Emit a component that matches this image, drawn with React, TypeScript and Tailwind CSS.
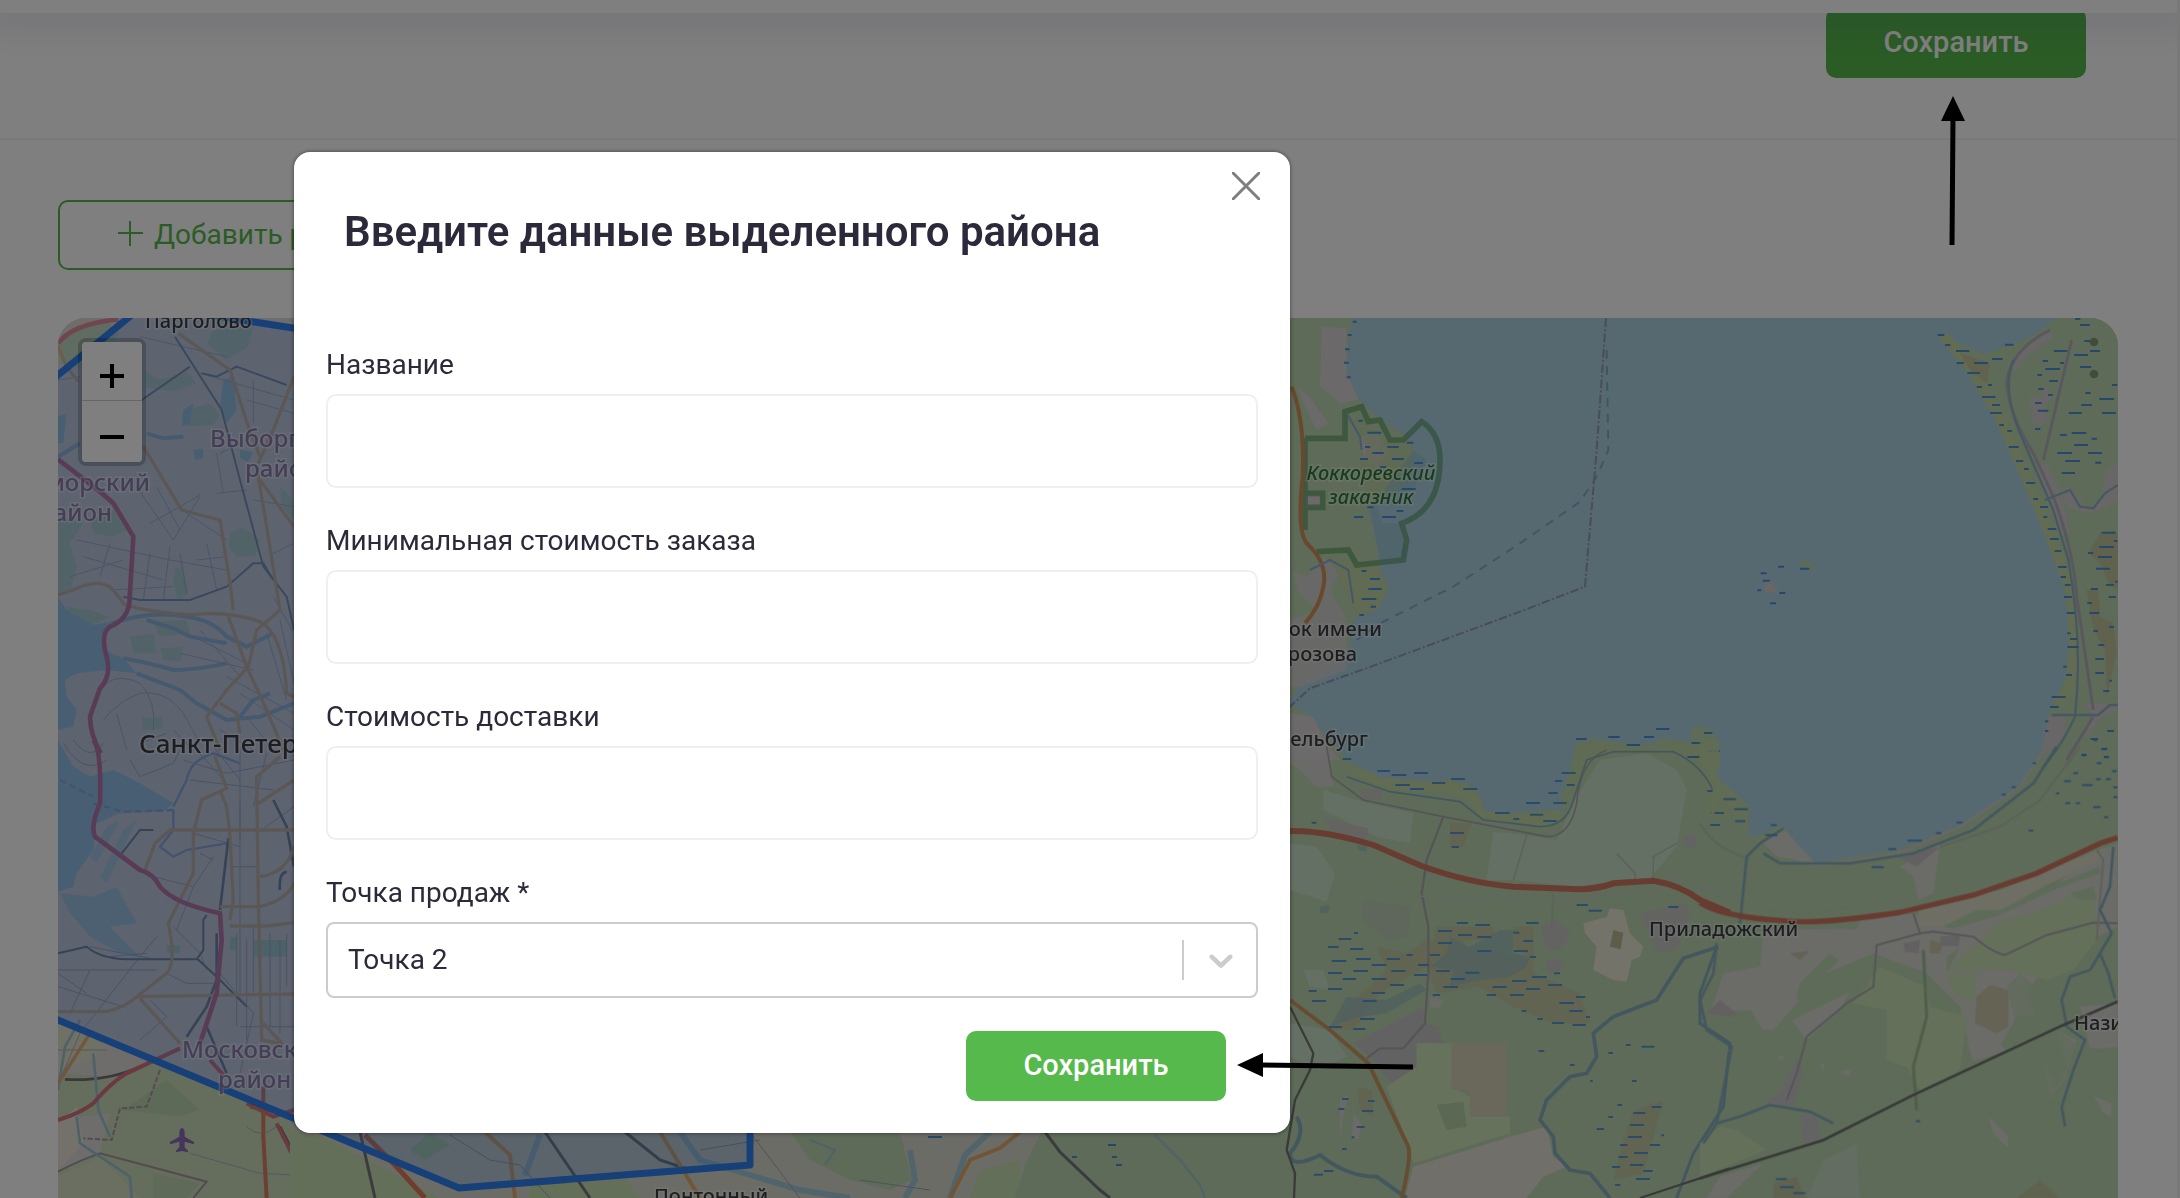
import { useId, useState } from 'react';
import type { ReactNode } from 'react';

const OUTLETS = ['Точка 1', 'Точка 2', 'Точка 3'];

const LAKE =
  'M1353 318L1349 340L1346 365L1349 378L1357 397L1370 410L1390 425L1405 435L1413 448L1413 470L1400 490L1368 508L1372 525L1377 545L1380 570L1388 585L1380 605L1360 614L1350 625L1350 650L1338 663L1310 678L1298 688L1288 704L1305 712L1320 730L1335 745L1347 760L1362 768L1378 776L1388 786L1420 785L1450 779L1475 788L1485 812L1510 815L1540 810L1562 812L1568 790L1573 765L1575 742L1590 738L1620 742L1650 745L1662 738L1690 742L1693 725L1710 728L1718 740L1720 760L1714 775L1723 795L1745 805L1750 810L1748 830L1752 838L1760 836L1785 828L1800 850L1815 863L1850 857L1895 850L1930 838L1965 823L1990 808L2015 790L2035 765L2048 745L2047 718L2055 700L2065 680L2068 650L2068 620L2065 590L2055 560L2045 525L2035 500L2020 470L2010 440L2000 420L1985 395L1970 375L1955 355L1943 335L1965 345L1985 354L2010 345L2035 335L2055 318Z';

const DISTRICT =
  'M-40 450L58 375L128 318L150 300L200 313L235 319L293 328L420 350L750 700L750 1165L459 1188L325 1132L293 1118L58 1020L-40 980Z';

// each tile is drawn in its own 3x coordinate space
function Tile({ x, y, children }: { x: number; y: number; children: ReactNode }) {
  return <g transform={`translate(${x} ${y}) scale(0.33333)`}>{children}</g>;
}

function CityNorth() {
  return (
    <Tile x={40} y={300}>
      <g fill="#b9d8c0">
        <path d="M54 130L100 90L200 60L240 100L200 160L140 210L60 190Z" />
        <path d="M520 90L640 80L625 140L560 180L500 130Z" />
        <path d="M315 210L360 240L440 215L470 250L400 275L315 262Z" />
        <path d="M455 325L510 310L540 345L520 375L440 380Z" />
        <path d="M570 700L610 680L660 720L645 770L590 770L565 740Z" />
        <path d="M54 650L130 670L90 730L110 800L90 880L54 880Z" />
        <path d="M150 660L220 630L260 690L220 710L160 700Z" />
        <path d="M720 560L762 600L762 660L725 620Z" />
        <path d="M340 965L440 960L450 1000L360 1010Z" />
        <path d="M270 1010L340 1000L350 1060L280 1060Z" />
        <path d="M360 1045L430 1040L420 1085L370 1080Z" />
        <path d="M405 805L430 800L445 880L415 900L400 850Z" />
        <path d="M305 1255L365 1250L370 1285L310 1290Z" />
        <path d="M80 920L150 930L210 950L160 975L90 950Z" />
      </g>
      <g fill="#9cc8e0">
        <path d="M54 890L80 930L160 975L215 965L190 1000L190 1050L250 1075L290 1120L200 1110L110 1120L75 1140L80 1190L110 1230L100 1280L54 1290Z" />
        <path d="M550 240L580 230L590 330L560 370L540 320Z" />
        <path d="M430 330L460 310L450 370L425 380Z" />
        <path d="M460 450L490 445L490 475L465 480Z" />
        <path d="M600 450L640 455L625 485L600 475Z" />
        <path d="M54 350L80 340L70 430L54 430Z" />
      </g>
      <g fill="none" stroke="#94b8d6" strokeWidth="12">
        <path d="M320 400L370 415L430 410" />
        <path d="M54 470L120 430" />
        <path d="M215 970Q330 930 440 950Q520 960 560 1010L620 1040L700 1000" />
        <path d="M250 1075Q330 1090 400 1110Q470 1110 560 1090" />
        <path d="M290 1120L420 1170L470 1210L560 1260L660 1250L762 1210" />
        <path d="M320 960L400 985L450 1010L560 1030" />
        <path d="M600 1250L640 1200L690 1180" />
      </g>
      <g fill="none" stroke="#a9a9bd" strokeWidth="3">
        <path d="M480 220L762 300M620 300L762 340M640 240V370M300 110L560 170" />
        <path d="M110 720L390 780L560 810M130 770L370 840M90 830L250 780M210 730L180 830M330 760L310 900M390 740L370 900" />
        <path d="M290 560L400 720M350 560L420 690M400 720L480 590M440 640L560 720" />
        <path d="M530 580L620 570M530 460L550 580M620 420L540 460M330 670L420 620L480 585" />
        <path d="M200 1150Q240 1120 300 1150Q350 1200 340 1290M190 1260Q240 1200 300 1180Q380 1170 430 1240L480 1330" />
        <path d="M700 760L762 730M680 400L762 420M640 600L762 620M700 890L762 1000M720 960L762 1150M680 1000L740 1200" />
        <path d="M440 1000L620 1090M480 990L600 1130M420 1060L640 1110M560 1130L762 1240M600 1180L762 1290" />
        <path d="M540 1290L640 1350M620 1250L700 1350M400 1290L460 1350M230 1240L260 1350M300 1330L380 1300" />
        <path d="M210 870L400 860M420 760L440 880M500 730L530 870M470 780L560 770M54 240L120 230" />
      </g>
      <g fill="none" stroke="#74839c" strokeWidth="6">
        <path d="M405 110L545 330L600 540L670 800L740 890L762 990" />
        <path d="M305 300L450 200M485 220L530 230L590 200L740 255" />
        <path d="M250 890L300 900L450 900L560 860L640 790L670 790L700 840" />
      </g>
      <g fill="none" stroke="#d9b285" strokeWidth="10">
        <path d="M54 140L80 200L115 245M310 440L425 630L540 660L570 850L580 930" />
        <path d="M415 100L570 210L625 380L660 470M762 230L700 390L655 490" />
        <path d="M650 500L680 680L720 930M660 540L762 680" />
        <path d="M54 885L100 870Q180 830 220 870L250 910Q280 930 450 945Q560 930 660 965Q730 1000 740 1180L762 1190" />
        <path d="M565 950L620 1100L680 1230L730 1350M720 930L650 990L625 1100L560 1170L500 1250L540 1350M540 1210L590 1240L600 1300" />
      </g>
      <g fill="none" strokeWidth="14">
        <path stroke="#e0788c" d="M54 130Q100 70 235 58" />
        <path stroke="#d05a88" d="M54 478L180 575L220 610L280 710L268 910Q260 960 210 980Q180 1000 200 1070Q215 1130 180 1165L150 1250Q150 1300 182 1360" />
      </g>
    </Tile>
  );
}

function CitySouth() {
  return (
    <Tile x={40} y={740}>
      <g fill="#c6deb0">
        <path d="M54 850L140 880L200 930L54 1000Z" fill="#e3e6c8" />
        <path d="M54 1000L200 1010L340 960L620 1080L762 1150L810 1180V1374H54V1290L180 1240L210 1120L54 1140Z" />
        <path d="M54 1150L110 1100L130 1210L54 1290Z" fill="#e9e6d4" />
        <path d="M250 1110L380 1020L480 1110L420 1130Z" fill="#b5d3a6" />
        <path d="M54 1310L180 1250L300 1374H54Z" fill="#d5dfc0" />
        <path d="M340 1300L480 1330L440 1374H340Z" fill="#b8d3a8" />
      </g>
      <g fill="#9cc8e0">
        <path d="M54 0L100 80L150 110L220 90L300 130L400 190L370 215L240 220L170 250L160 330L110 400L100 440L54 455Z" />
        <path d="M60 460L160 470L230 440L290 550L210 560L300 650L240 640L150 590L90 520Z" opacity=".75" />
        <path d="M200 260L240 240L170 370L150 350ZM250 270L290 240L200 430L180 410Z" opacity=".6" />
      </g>
      <g fill="#a5d5c5">
        <path d="M570 590H590V630H570ZM640 600H740V650H640ZM380 615H420V640H380Z" />
      </g>
      <g fill="none" stroke="#8aa6d2" strokeWidth="7">
        <path d="M400 200L440 120Q450 60 520 40L600 70M400 210L400 270L360 320L400 350L440 330L500 320L560 310" />
        <path d="M160 190L250 215L400 210" strokeDasharray="20 12" />
        <path d="M60 120L160 170" strokeDasharray="20 12" />
      </g>
      <g fill="none" stroke="#a2a3b6" strokeWidth="3">
        <path d="M70 10Q130 110 200 60M100 0Q150 70 190 10M270 60L300 110L400 70L420 30M430 60L560 100L762 60M450 120L700 150M470 30L560 130M520 20L600 120M600 20V300M680 40L640 200" />
        <path d="M460 280L600 320M600 200V760M570 380H650M650 280L762 200M480 340L520 360M340 410L460 440L520 350M410 570L460 440" />
        <path d="M54 690L150 690L350 690M54 740L250 800M150 690L90 820M350 590L300 650L120 880L60 1020M400 560L480 640L500 690M380 700L440 730L520 730" />
        <path d="M590 580V860M620 600V900M640 560V760M690 580V860M720 600V880M740 580V740M600 860H762M540 700L640 820L600 1000" />
        <path d="M54 930L200 930M54 700L140 760M330 780L380 830L300 900M150 620L250 640L360 660M210 650L320 640" />
        <path d="M450 1240L660 1300L762 1305M620 1160Q660 1200 710 1160" />
      </g>
      <g fill="none" stroke="#63748a" strokeWidth="6">
        <path d="M54 640L140 620Q180 655 260 658L470 658L490 630V540L500 525M245 340L300 270H340M470 655L530 710L620 800" />
        <path d="M565 295L540 510M700 180L740 260L762 380M740 395Q715 400 720 450M530 580L530 720L500 800L440 890M500 860L560 1000" strokeWidth="8" />
        <path d="M75 1018Q200 1025 300 980L410 930M720 1160L810 1330" stroke="#5d5a58" strokeWidth="8" />
      </g>
      <g fill="none" stroke="#9b8796" strokeWidth="6">
        <path d="M54 1295Q120 1260 180 1240L500 1325L460 1374" />
        <path d="M360 990L320 1100L240 1105L215 1200L130 1195" strokeDasharray="16 6" />
      </g>
      <g fill="none" stroke="#8fbdd0" strokeWidth="8">
        <path d="M120 840L75 920L54 1050M110 1130L120 1210L180 1250L270 1310L275 1374M160 940L175 1110L210 1190" />
      </g>
      <g fill="none" stroke="#d9b285" strokeWidth="10">
        <path d="M54 815H200Q260 800 290 770L380 700Q410 670 385 550L460 400L460 280L485 180L560 145L525 50" />
        <path d="M315 390L345 310L390 270H650L762 270M540 150L560 200L570 290L580 480L570 540" />
        <path d="M720 50L650 110L655 480L665 900L720 910M655 190L762 120M660 410Q740 400 762 320" />
        <path d="M540 500H660Q740 480 762 430M570 558H680L762 548M290 770L762 762M300 775L420 910M670 850L730 915" />
      </g>
      <g fill="none" strokeWidth="14">
        <path stroke="#e2a25e" strokeWidth="10" d="M150 880L54 1030" />
        <path stroke="#d05a88" d="M160 0Q185 30 180 190Q150 260 165 290L300 390Q340 400 360 440Q400 490 540 520L545 600L530 760L480 910" />
        <path stroke="#d75a6c" strokeWidth="12" d="M54 1140Q120 1120 160 1090Q210 1030 260 1000L420 925M510 960L550 1005M620 1090L700 1130L762 1110M710 1150L760 1250L800 1374" />
        <path stroke="#d8694a" strokeWidth="12" d="M670 1040V1190L680 1374M630 1100L740 1120" />
      </g>
      <path
        fill="#7a4fae"
        d="M426 1164Q434 1166 434 1180V1190L462 1206V1213L434 1205V1222L444 1232V1237L426 1233L408 1237V1232L418 1222V1205L390 1213V1206L418 1190V1180Q418 1166 426 1164Z"
      />
    </Tile>
  );
}

// strip of the map that stays visible under the dialog
function RiverStrip() {
  return (
    <g fill="none">
      <path fill="#d8d9ce" d="M290 1125H1290V1198H290Z" />
      <path fill="#c6deb0" d="M290 1130L330 1140L440 1198H290ZM530 1180L620 1172L640 1198H530ZM980 1170L1020 1160V1198H970Z" />
      <path fill="#bad6b0" d="M790 1132H900L912 1180L890 1190L850 1180L810 1160ZM1045 1125L1290 1110V1198H1015L1025 1165ZM430 1132L450 1145L425 1160L410 1150Z" />
      <path stroke="#a5c9d6" strokeWidth="6" d="M680 1132L700 1160L760 1178L800 1190L850 1198M990 1132L965 1155L950 1198M540 1135L525 1175M910 1150L915 1180L905 1198" />
      <path stroke="#9cc4d2" strokeWidth="2" d="M1155 1135L1180 1160L1200 1185L1205 1198M810 1140L835 1150L825 1165" />
      <path stroke="#77777a" strokeWidth="3" d="M360 1132L375 1198M545 1132L590 1198M625 1132L660 1160L690 1170M1045 1132L1060 1152L1100 1190L1110 1198" />
      <path stroke="#e0ac6e" strokeWidth="4" d="M485 1132L510 1155L515 1198M660 1132L680 1165L700 1198M1020 1132L1000 1148L970 1160L950 1198" />
      <path stroke="#e0785c" strokeWidth="5" d="M365 1135L395 1165L425 1198" />
      <path stroke="#4a90d0" strokeWidth="2" d="M928 1137h14M1108 1145h8M1072 1157h5M1112 1157h5M1116 1165h6" />
      <path stroke="#a2a3b6" d="M450 1135L490 1160L520 1165L550 1198M700 1150L760 1140M750 1132L800 1198M860 1180L930 1190" />
    </g>
  );
}

function LakeWest() {
  return (
    <Tile x={1280} y={310}>
      <g fill="#d6d2d4">
        <path d="M125 50L200 55L200 190L235 270L180 280L120 230Z" />
        <path d="M50 230L90 260L145 340L110 360L75 290Z" />
        <path d="M240 380L290 370L325 430L290 470L250 440Z" />
        <path d="M78 555H120V590H78Z" />
        <path d="M35 780L80 800L130 740L180 790L150 840L200 930V1080L60 1130H30V930L110 900L60 850Z" opacity=".8" />
        <path d="M30 1210L100 1220L140 1300L180 1350H30Z" />
      </g>
      <path fill="#c2d4a6" d="M200 310L250 330L310 380L400 410L395 480L330 540L270 570L240 500L260 410Z" opacity=".6" />
      <path fill="#c2d4a6" d="M150 740L290 770L325 840L290 900L230 920L200 850Z" />
      <path fill="#93bdd0" opacity=".5" d="M400 420L440 450L400 540L280 570L310 640L360 640L380 740L300 750L270 600Z" />
      <g fill="none">
        <path stroke="#4a9153" strokeWidth="17" opacity=".55" d="M75 385H195V305L245 290L265 335L300 330L330 390H370L425 335Q480 370 480 450Q480 600 365 640L380 690L370 750L230 765L205 720L110 725M75 550H128V592H75M75 385V660" />
        <path stroke="#d0935a" strokeWidth="12" d="M35 230Q75 330 68 500Q50 660 80 700Q145 760 130 830Q120 890 75 940" />
        <path stroke="#8a84a4" strokeWidth="6" strokeDasharray="26 7 6 7" opacity=".75" d="M978 25L950 420L915 830L720 905L300 1060L90 1135L30 1190" />
        <path stroke="#7c9cc8" strokeWidth="6" strokeDasharray="26 22" opacity=".8" d="M980 120L985 420L950 500L900 575L720 700L520 830L300 940L230 990" />
        <path stroke="#8aaed4" strokeWidth="6" d="M90 780L150 750L205 780L220 880M200 310L240 380L245 420" />
        <path stroke="#4a90d8" strokeWidth="6" d="M218 35h12M203 75h12M195 118h14M192 158h14M200 202h12M262 368h20M282 368h22M235 332h14M255 411h16M322 411h34M380 398h20M277 429h34M240 447h24M336 447h36M403 459h26M300 471h18M365 537h42M262 592h18M350 603h20M222 621h28M306 621h42M245 783h14M270 807h30M265 837h40M245 867h44M272 890h16M238 915h14M888 1287h32M985 1281h34M1040 1305h38M1092 1281h30M1128 1257h40M1275 1269h22M1235 1299h36M1280 1323h40M1225 1341h36" />
      </g>
    </Tile>
  );
}

function LakeEast() {
  return (
    <Tile x={1700} y={310}>
      <g fill="#d2cdcf">
        <path d="M940 140L1050 60L1060 80L980 140L945 190Z" />
        <path d="M990 250L1015 270L1040 225L1055 260L1030 290L1045 330L1020 352L995 330Z" />
        <path d="M1010 470L1040 460L1085 550L1110 670L1085 670Z" />
        <path d="M1085 540L1110 530L1165 600L1205 570L1215 490L1253 460V570L1200 600L1165 612L1100 590Z" />
        <path d="M1045 1220H1100L1085 1290L1020 1350Z" />
        <path d="M1150 1180H1253V1200L1205 1220L1165 1280L1150 1260L1180 1215Z" />
        <path d="M190 830L210 808L240 850L195 845Z" />
      </g>
      <g fill="#c9b68c" opacity=".5">
        <path d="M1165 730L1200 670H1253V840L1225 820L1200 760Z" />
        <path d="M1160 840H1195L1200 920L1240 940L1250 1030L1220 1160L1215 1020L1180 960Z" />
        <path d="M780 130L870 160L860 220L810 180Z" />
      </g>
      <path fill="#c0d6a6" d="M300 745L350 770L340 780L310 770ZM850 140L940 110L930 125L860 150Z" />
      <path fill="none" stroke="#b3b0bc" strokeWidth="9" d="M1050 60Q930 120 920 220Q930 320 1000 430L1060 560Q1120 720 1130 860L1180 1200M1115 90L1030 450M1180 1220L1100 1350" />
      <path fill="none" stroke="#8cb2c2" strokeWidth="7" d="M940 150Q905 240 960 370L1060 600L1105 750Q1150 1000 1125 1220Q1090 1300 1030 1370M1035 570L1110 540L1140 590L1180 595L1215 550L1253 525M1055 1215H1195L1230 1185H1253" />
      <path
        fill="none"
        stroke="#4a90d8"
        strokeWidth="6"
        d="M1125 27h16M1140 45h30M713 75h20M735 105h16M915 104h26M1153 93h30M768 123h40M1062 123h40M1170 123h30M1122 135h42M876 147h32M1028 153h16M770 159h22M822 159h42M1080 159h12M1140 171h34M1036 177h44M802 189h38M1012 195h14M1048 213h26M1236 225h16M830 231h16M864 225h12M1015 237h16M1156 249h16M1044 255h14M846 261h40M1198 267h44M1005 279h20M876 285h24M1144 285h32M1013 302h32M870 309h36M1106 309h40M1206 309h42M898 345h14M1005 357h16M922 363h14M1115 369h44M1080 375h20M1175 386h16M1122 405h42M926 411h30M1072 429h44M1164 429h42M948 453h22M1096 453h44M1186 458h18M972 477h14M1085 489h40M978 519h28M1000 567h14M1020 591h24M1030 621h12M1043 657h26M1205 668h42M1050 687h26M1242 693h10M1198 711h44M1064 723h20M1164 729h16M1194 741h42M1074 771h26M1188 776h42M300 776h28M234 770h18M182 790h18M1082 801h16M188 812h22M1246 815h7M1094 825h18M1218 825h24M1172 837h22M172 841h12M238 849h18M1092 861h24M1226 861h22M210 880h18M1162 879h14M1100 909h24M1168 909h30M1228 951h14M1180 963h14M1102 970h10M1110 987h22M1102 1011h34M1195 1005h18M1186 1047h26M1090 1070h10M1186 1089h26M1098 1095h18M1228 1112h8M1210 1143h18M1055 1161h42M1050 1191h26M1035 1234h10M1222 1263h20M1035 1263h10M12 1269h24M1172 1287h22M1205 1317h16M1145 1335h14M1212 1341h14"
      />
      <circle cx="1182" cy="96" r="13" fill="#7f9b74" />
      <circle cx="1182" cy="192" r="13" fill="#7f9b74" />
    </Tile>
  );
}

function SouthWest() {
  return (
    <Tile x={1280} y={740}>
      <g fill="#cde3ce">
        <path d="M890 170L960 60L1100 40L1190 90L1220 150L1190 320L1110 415L1000 420L900 440L700 420H620L640 275L740 285L830 300Z" />
        <path d="M130 150L250 185L400 220L390 310L290 290L130 210Z" />
        <path d="M30 310L110 320L165 400L140 485L30 450ZM70 690L130 690L150 750L90 740ZM30 850L150 870L200 950L120 990L30 950Z" />
      </g>
      <g fill="#d8d4d6">
        <path d="M30 20L140 10L160 140L110 140L60 90L30 70Z" />
        <path d="M240 150L310 145L300 180L250 175ZM135 235L265 265L255 310L150 270Z" fill="#cac6c8" />
        <path d="M220 910L430 800L435 850L475 860L490 910L405 915L410 980L340 1040L280 960Z" fill="#c8c3c8" />
        <path d="M250 480L390 500L385 590L320 600L250 540Z" fill="#c0cdba" />
        <path d="M780 560L830 540L875 580L840 630H800ZM1210 290L1250 280V325L1215 320ZM800 660L850 655V690L800 700Z" fill="#c9c8c8" />
        <path d="M1080 520L1220 490L1230 520L1190 630L1130 635Z" fill="#c8c5c8" />
        <path d="M180 1080L205 1060L190 1130L180 1200ZM220 1120L245 1150L235 1200L215 1190ZM450 770L490 780L480 805L450 800Z" />
      </g>
      <path fill="#eee8da" d="M910 550L980 530L990 505L1030 510L1050 580L1090 620L1080 650L1055 660L1040 725L1000 720L940 690L950 620L915 580Z" />
      <path fill="#bcb78f" d="M1000 570L1030 578L1022 628L990 620Z" />
      <path fill="#d0e6ba" d="M410 980V910H515V1040L570 1070V1130L690 1130V1180L400 1270L390 1230L320 1040Z" />
      <path fill="#d6d0b8" d="M515 910H680V1130H570V1050H515Z" />
      <path fill="#b4d0a8" d="M470 1095L550 1085L560 1160L500 1170Z" />
      <path fill="#e6e0d6" d="M375 1374L400 1280L690 1190L800 1160L820 1250L860 1280L790 1310L740 1374Z" />
      <g fill="#cdb98a" opacity=".45">
        <path d="M470 560H640V600H560L500 640L450 650ZM700 560H760V700L900 760L930 850H820L700 800L600 740L470 760L440 680L300 760L220 870L150 870L200 800L320 690L290 620L380 640L440 600L760 660L700 620Z" />
        <path d="M510 250H575L550 320H510ZM230 1040L275 1050L280 1130L240 1110ZM1060 1110L1150 1080L1090 1300L1000 1320L1030 1200Z" />
      </g>
      <g fill="#8cb6cf" opacity=".5">
        <path d="M510 590L570 620L660 570L700 570V640L750 650L740 680L690 710L600 720L510 740L520 690L450 680L500 640Z" />
        <path d="M200 770L320 780L420 730L440 750L320 820L240 830L150 860ZM120 500L150 495L145 520L120 520ZM230 315H260V335L235 330Z" />
      </g>
      <path fill="#c4d8a6" d="M180 70L230 85L290 110L400 120L480 125L560 130L600 170L610 215L700 220L840 210L850 250L790 260L600 230L560 170L450 150L330 150L250 120Z" />
      <path fill="#bfd6a6" d="M885 30L930 10L1080 20L1180 10L1280 10L1320 30L1310 120L1350 230L1290 230L1270 110L1190 40L960 40L890 130L850 220L840 180Z" />
      <g fill="none" stroke="#a9a5ae" strokeWidth="5">
        <path d="M140 20L155 110L250 180L490 230L800 290Q870 290 890 190Q900 60 980 30" />
        <path d="M490 230L440 360L425 460L445 560V700L435 850L370 925L300 925L260 955" strokeWidth="7" />
        <path d="M740 285L700 420M1010 340L1065 400V420M1120 420V350L1190 310M820 460L815 560" stroke="#bcc2b8" />
        <path d="M100 300L340 465L800 485L1000 460L1160 450M1150 410L1230 420L1350 475" stroke="#c8ccc4" />
        <path d="M1280 230Q1270 290 1350 330M890 1200L1340 970" stroke="#c3d2ba" />
      </g>
      <g fill="none" stroke="#82aac0" strokeWidth="9">
        <path d="M200 110L330 155L540 185L610 240L780 260Q860 260 880 180L920 60L1000 35L1180 35Q1280 80 1310 180" strokeWidth="5" />
        <path d="M1315 620L1210 655L1130 780L1000 830L940 880L950 950L920 1000L870 1010L800 1080L780 1140L820 1190L825 1240L870 1290L930 1300L990 1374" strokeWidth="11" />
        <path d="M1310 620L1260 760V850L1350 910L1330 1100L1240 1240L1190 1374" />
        <path d="M50 1130Q80 1180 30 1240Q30 1290 120 1245Q200 1310 290 1310L380 1374" strokeWidth="12" />
      </g>
      <g fill="none" stroke="#6c6c6c" strokeWidth="7">
        <path d="M30 800L100 940L90 990L45 1080L20 1230L45 1300L42 1374M1080 1374L1350 1285" />
      </g>
      <path fill="none" stroke="#d0935a" strokeWidth="12" d="M30 780L150 870L265 970L385 1220Q395 1250 365 1374" />
      <path fill="none" stroke="#d66e5c" strokeWidth="18" d="M30 273Q130 270 280 315L425 378Q570 430 700 440L900 448Q960 445 1000 430L1120 422Q1200 435 1260 480L1350 518" />
      <path
        fill="none"
        stroke="#4a90d8"
        strokeWidth="6"
        d="M188 57h26M292 93h38M402 99h42M335 105h44M513 117h42M456 129h40M346 135h44M390 147h42M550 147h42M845 99h42M825 123h22M860 135h24M805 159h28M738 189h42M820 189h40M645 219h44M750 224h40M700 237h18M790 243h40M1040 15h40M1235 9h38M1280 33h40M1222 51h36M1268 63h40M1288 93h20M1282 153h44M1332 177h18M1292 219h40M1290 255h30M95 248h14M510 279h42M515 321h22M890 495h34M926 512h40M1165 501h30M530 549h34M586 555h44M738 549h38M474 573h42M700 578h18M534 585h42M222 579h12M176 597h38M592 591h42M474 609h42M730 603h28M144 621h32M210 627h40M592 633h42M702 633h42M380 645h18M450 645h30M228 657h44M320 657h40M750 651h18M155 663h44M275 675h44M414 675h32M220 693h44M334 693h42M468 693h42M556 698h42M144 699h42M822 700h18M402 705h40M188 717h40M275 717h44M512 717h42M756 711h44M696 723h44M330 735h42M804 735h42M490 741h44M638 741h42M144 747h42M738 747h42M86 753h24M275 759h40M458 765h22M620 765h28M690 765h42M888 771h28M96 783h42M248 783h42M838 789h44M725 813h14M868 813h40M240 837h44M772 837h16M918 831h12M816 849h36M146 861h40M220 867h36M878 855h40M1038 915h14M1085 920h38M775 933h18M985 939h14M870 975h14M930 1023h8M1056 1023h14M186 1077h20M264 1083h20M1012 1095h14M175 1107h18M246 1113h34M1115 1101h30M1060 1119h36M985 1131h14M230 1161h24M950 1167h22M1050 1155h42M215 1192h8M1044 1191h42M1144 1186h8M1020 1215h22M1110 1215h30M186 1227h14M1062 1239h42M1015 1251h28M1050 1275h40M996 1281h24M132 1293h28M1090 1293h28M102 1304h26M1068 1317h42M1005 1335h16"
      />
    </Tile>
  );
}

function SouthEast() {
  return (
    <Tile x={1700} y={740}>
      <g fill="#dbd7d5">
        <path d="M190 570L470 565L480 540L640 520L740 560L900 500L1050 450L1190 330L1253 310V560L1180 600L1050 660L980 760L1010 830L950 830L900 920L820 960L780 800L680 700L520 640L380 700L300 780L220 870L190 870L150 810L30 820L70 700L180 680Z" />
        <path d="M190 310L255 270L345 370L230 350ZM600 380L720 310L700 460L655 480L640 410Z" />
        <path d="M275 840L450 755L420 810L320 900ZM800 900L860 880L920 930L820 965Z" />
        <path d="M1070 870L1130 900L1100 1010L1050 1080L1030 960L1070 1040L1100 980ZM1140 800L1253 790V920L1170 930ZM1180 1065L1235 1090V1130L1210 1120ZM865 1130L925 1190V1225L880 1180Z" />
        <path d="M250 1040L290 950L310 1000L280 1100L200 1090ZM300 1120L350 1130L365 1210L310 1220Z" fill="#cbc6c9" />
        <path d="M20 1374L60 1310L190 1270L80 1374ZM230 945L255 950L245 965ZM360 965L378 980L365 990ZM420 995L460 985L445 1010Z" />
      </g>
      <path fill="#e0decb" d="M660 500L900 450L1190 330L1220 350L1050 430L900 510L730 560L650 560Z" />
      <g fill="#cbe2b4">
        <path d="M540 680L680 740L690 800L800 830L780 990L660 1050L620 980L560 960V810L460 790Z" />
        <path d="M820 620L900 540L1000 520L1180 440L1190 600L1120 690L1040 720L930 690L740 690Z" />
        <path d="M0 1210L60 1160L110 1170L200 1230L0 1310Z" />
        <path d="M740 700L830 700L820 790L760 760Z" />
      </g>
      <g fill="#bad6b0">
        <path d="M730 560L830 510L900 510L1050 440L1200 380V400L1060 450L900 525L760 565ZM1110 460L1180 440L1190 480L1140 480Z" />
        <path d="M300 730L390 640L415 660L370 710L460 730L500 700L510 740L300 800L290 770ZM390 550L470 545V570L400 560ZM740 650L780 620L740 700Z" />
        <path d="M600 690L650 690V735Z" />
        <path d="M920 740L960 700L1080 800L1070 870L1140 920L1253 930V1060L1000 1100L900 940L960 900Z" opacity=".6" />
      </g>
      <path fill="#c3b88c" opacity=".6" d="M830 770L870 735L925 750V860L890 880L825 850ZM690 600L730 610L720 640L690 640ZM270 640L330 632L300 660ZM220 1330L290 1310L315 1374H220ZM950 1374L1020 1320L1080 1374Z" />
      <path fill="#c8dcc8" d="M320 1374L370 1260L470 1210L480 1374Z" />
      <path fill="#c6bec5" d="M610 610L660 600L655 640L615 635ZM720 590L780 585L775 620L725 615ZM20 820L60 780L110 820L90 830ZM590 350L720 320L650 380Z" />
      <path fill="#c2d8a6" d="M0 0H55L60 70L50 110L140 190L145 270L60 170L30 260L40 120L0 70ZM155 300L240 255L250 265L180 310Z" />
      <g fill="none" stroke="#a9a5ae" strokeWidth="6">
        <path d="M1253 550L1180 548L1040 585L915 645Q880 640 820 590L700 575L660 580L640 520M660 580L530 615L520 740L440 790L320 890L290 1000L260 1080" />
        <path d="M0 250Q40 320 130 350M720 320L900 260L1020 180L1140 20M1190 330L1210 360L1190 600" stroke="#b8c0b4" />
        <path d="M330 380L540 350L620 330L780 260L960 140L1050 0" stroke="#cfd0cc" strokeWidth="10" />
        <path d="M0 440Q200 540 400 510L640 465M20 860L160 845M0 970L200 880M370 1200L380 1250" stroke="#c3d2ba" strokeWidth="4" />
      </g>
      <path fill="none" stroke="#9bb894" strokeWidth="9" d="M670 630L680 830L640 980L650 1110" />
      <g fill="none" stroke="#82aac0" strokeWidth="8">
        <path d="M250 265L180 310L140 350L120 550M190 340L240 370L450 370L640 340L820 270L1000 130L1070 20" />
        <path d="M50 610L40 700L0 780L20 870L95 920L60 1100L50 1150L10 1210M50 1150L120 1130L210 1095L330 1115L400 1150" />
        <path d="M1240 320L1230 440L1200 510L1235 580L1200 640L1170 690L1110 710L1085 780L1100 860L1155 900L1120 990L1085 1100L1095 1160" />
        <path d="M1200 640L1225 700L1245 775" />
      </g>
      <path fill="none" stroke="#676767" strokeWidth="8" d="M0 1315L370 1200L640 1065L1090 855L1253 785" />
      <path fill="none" stroke="#d66e5c" strokeWidth="16" d="M0 487Q60 530 250 542Q350 555 600 517L820 465L1010 400L1200 310L1253 293" />
      <path
        fill="none"
        stroke="#4a90d8"
        strokeWidth="6"
        d="M1180 0h12M1205 27h16M1145 45h14M1190 69h14M1212 51h14M1120 99h14M1236 93h14M1092 123h20M1188 117h14M1218 117h14M1146 135h32M1240 142h12M1068 160h10M1096 189h14M1128 189h12M1240 171h12M1180 201h22M1212 231h12M986 272h14M770 248h18M708 279h16M622 302h44M515 381h36M935 141h12M905 164h12M998 69h10M70 177h38M102 207h42M106 243h30M212 255h18M196 285h36M565 327h24M648 1143h12M228 1317h32M240 1341h42M280 1359h36"
      />
    </Tile>
  );
}

function RegionMap() {
  return (
    <svg
      className="absolute inset-0 h-full w-full"
      viewBox="58 318 2060 880"
      preserveAspectRatio="xMinYMin slice"
      role="img"
      aria-label="Карта районов доставки"
    >
      <rect x="58" y="318" width="560" height="880" fill="#dcdad9" />
      <rect x="618" y="318" width="1500" height="880" fill="#bad6b0" />
      <g opacity=".8">
        <CityNorth />
        <CitySouth />
      </g>
      <RiverStrip />
      <path d={LAKE} fill="#acd3e0" />
      <path
        d="M1943 335L1970 368L2000 418L2023 470L2048 530L2072 595L2074 650L2070 685L2058 705"
        fill="none"
        stroke="#c2d8a6"
        strokeWidth="10"
      />
      <LakeWest />
      <LakeEast />
      <g opacity=".9">
        <SouthWest />
        <SouthEast />
      </g>

      <path d={DISTRICT} fill="#3388ff" fillOpacity=".2" stroke="#2f80f0" strokeWidth="7" strokeLinejoin="round" />

      <g className="font-['Noto_Sans',sans-serif] font-medium" fill="#3d3d44" stroke="#ffffff" strokeOpacity=".35" strokeWidth="3" paintOrder="stroke" fontSize="20">
        <text x="145" y="328">Парголово</text>
        <text x="139" y="753" fontSize="26">Санкт-Петербург</text>
        <text x="654" y="1203">Понтонный</text>
        <text x="1382" y="636" textAnchor="end">посёлок имени</text>
        <text x="1357" y="661" textAnchor="end">Морозова</text>
        <text x="1368" y="746" textAnchor="end">Шлиссельбург</text>
        <text x="1649" y="936">Приладожский</text>
        <text x="2074" y="1030">Назия</text>
        <g fill="#8a79b0" fontSize="24">
          <text x="210" y="447">Выборгский</text>
          <text x="245" y="477">район</text>
          <text x="150" y="491" textAnchor="end">Приморский</text>
          <text x="112" y="521" textAnchor="end">район</text>
          <text x="182" y="1058">Московский</text>
          <text x="218" y="1088">район</text>
        </g>
        <g fill="#2c7a35" fontSize="20" fontStyle="italic" textAnchor="middle">
          <text x="1371" y="480">Коккоревский</text>
          <text x="1371" y="504">заказник</text>
        </g>
      </g>
    </svg>
  );
}

function Field({ label }: { label: string }) {
  const id = useId();
  return (
    <div className="flex flex-col gap-[13px]">
      <label htmlFor={id} className="text-[28px] leading-8">
        {label}
      </label>
      <input id={id} type="text" className="h-[94px] w-full rounded-[10px] border-2 border-[#efefef] px-5 text-[28px] outline-none" />
    </div>
  );
}

function AreaDialog() {
  const [outlet, setOutlet] = useState('Точка 2');

  return (
    <div
      role="dialog"
      aria-modal="true"
      aria-labelledby="area-title"
      className="w-full max-w-[996px] rounded-2xl bg-white pb-8 text-[#2c2a3a] shadow-[0_0_4px_rgba(0,0,0,0.5)]"
    >
      <div className="flex items-start justify-between pt-5 pr-[30px] pl-[50px]">
        <h2 id="area-title" className="pt-9 text-[42px] leading-[48px] font-semibold">
          Введите данные выделенного района
        </h2>
        <button type="button" aria-label="Закрыть" className="text-[#7f7f7f]">
          <svg className="h-7 w-7" viewBox="0 0 28 28" fill="none" stroke="currentColor" strokeWidth="3" strokeLinecap="round">
            <path d="M1 1l26 26M27 1L1 27" />
          </svg>
        </button>
      </div>

      <form className="mt-[93px] flex flex-col gap-[37px] px-8" onSubmit={(e) => e.preventDefault()}>
        <Field label="Название" />
        <Field label="Минимальная стоимость заказа" />
        <Field label="Стоимость доставки" />
        <div className="flex flex-col gap-[13px]">
          <label htmlFor="outlet" className="text-[28px] leading-8">
            Точка продаж *
          </label>
          <div className="relative">
            <select
              id="outlet"
              value={outlet}
              onChange={(e) => setOutlet(e.target.value)}
              className="h-[76px] w-full appearance-none rounded-lg border-2 border-[#cccccc] bg-white px-5 text-[28px] outline-none"
            >
              {OUTLETS.map((o) => (
                <option key={o}>{o}</option>
              ))}
            </select>
            <div className="pointer-events-none absolute inset-y-0 right-0 flex w-19 items-center justify-center">
              <span className="h-10 w-0.5 bg-[#cccccc]" />
              <svg className="mx-auto h-10 w-10" viewBox="0 0 20 20" fill="#cccccc">
                <path d="M4.516 7.548c0.436-0.446 1.043-0.481 1.576 0l3.908 3.747 3.908-3.747c0.533-0.481 1.141-0.446 1.574 0 0.436 0.445 0.408 1.197 0 1.615-0.406 0.418-4.695 4.502-4.695 4.502-0.217 0.223-0.502 0.335-0.787 0.335s-0.57-0.112-0.789-0.335c0 0-4.287-4.084-4.695-4.502s-0.436-1.17 0-1.615z" />
              </svg>
            </div>
          </div>
        </div>
        <div className="-mt-1 flex justify-end pr-8">
          <div className="relative">
            <button type="submit" className="h-[70px] w-[260px] rounded-[10px] bg-[#56b94b] text-[29px] font-medium text-white">
              Сохранить
            </button>
            <svg className="pointer-events-none absolute top-[22px] left-[271px] h-7 w-[177px]" viewBox="0 0 177 28">
              <path d="M0 12L26 0V24Z" />
              <path d="M24 12L176 14" stroke="#000" strokeWidth="5" />
            </svg>
          </div>
        </div>
      </form>
    </div>
  );
}

export default function App() {
  return (
    <div className="flex h-screen flex-col overflow-hidden border-r-3 border-[#f0f0f2] bg-white font-[Roboto,sans-serif]">
      <header className="relative z-10 h-[13px] shrink-0 bg-white shadow-[0_8px_30px_12px_rgba(82,63,125,0.11)]" />
      <div className="flex h-[127px] shrink-0 justify-end border-b-2 border-[#f3f3f8] pr-[91px]">
        <div className="relative -mt-[5px]">
          <button type="button" className="h-[70px] w-[260px] rounded-[10px] bg-[#56b94b] text-[29px] font-medium text-white">
            Сохранить
          </button>
          <svg className="pointer-events-none absolute top-[88px] left-[115px] h-[150px] w-6" viewBox="0 0 24 150">
            <path d="M12 0L24 25H0Z" />
            <path d="M12 22L11 149" stroke="#000" strokeWidth="5" />
          </svg>
        </div>
      </div>

      <main className="flex min-h-0 flex-1 flex-col gap-12 pt-15 pr-[59px] pl-[58px]">
        <button
          type="button"
          className="flex h-[70px] shrink-0 items-center gap-2.5 self-start rounded-[10px] border-2 border-[#56b94b] px-14 text-[28px] text-[#56b94b]"
        >
          <svg className="h-7 w-7" viewBox="0 0 28 28" fill="none" stroke="currentColor" strokeWidth="2">
            <path d="M14 0v25M2 12h25" />
          </svg>
          Добавить район
        </button>
        <div className="relative min-h-0 flex-1 overflow-hidden rounded-t-[28px] bg-[#bad6b0]">
          <RegionMap />
          <div className="absolute top-5 left-5 flex flex-col rounded-lg border-4 border-black/20 bg-clip-padding">
            <button type="button" aria-label="Приблизить" className="flex h-[59px] w-[60px] items-center justify-center rounded-t border-b border-[#ccc] bg-white pt-2.5">
              <svg className="h-6 w-6" viewBox="0 0 24 24" stroke="#000" strokeWidth="4">
                <path d="M12 0v24M0 12h24" />
              </svg>
            </button>
            <button type="button" aria-label="Отдалить" className="flex h-[61px] w-[60px] items-center justify-center rounded-b bg-white pt-2.5">
              <svg className="h-6 w-6" viewBox="0 0 24 24" stroke="#000" strokeWidth="4">
                <path d="M0 12h24" />
              </svg>
            </button>
          </div>
        </div>
      </main>

      <div className="fixed inset-0 z-20 flex items-start overflow-hidden bg-black/50 pt-[152px] pl-[294px]">
        <AreaDialog />
      </div>
    </div>
  );
}
